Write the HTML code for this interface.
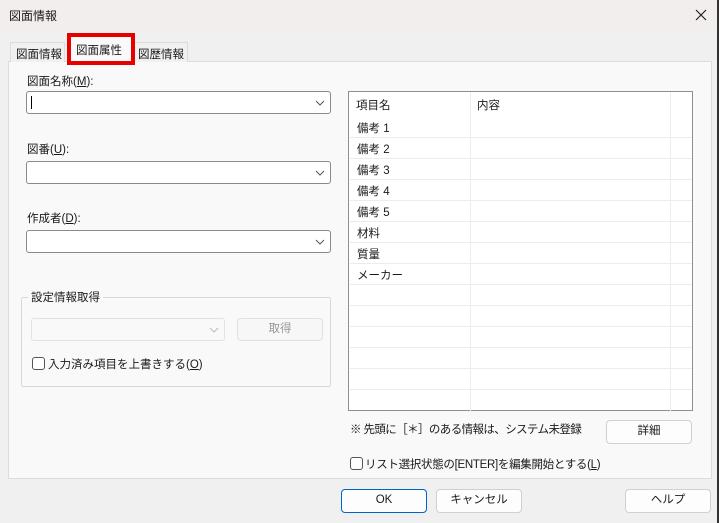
<!DOCTYPE html>
<html><head><meta charset="utf-8"><style>
*{box-sizing:border-box;margin:0;padding:0}
body{width:719px;height:523px;background:#f0f0f0;font-family:"Liberation Sans","Noto Sans CJK JP",sans-serif;font-size:11.5px;color:#1a1a1a;position:relative;overflow:hidden;white-space:nowrap}
.a{position:absolute}
.title{left:0;top:0;width:719px;height:31px;background:#f2eeee;}
.combo{background:#fff;border:1px solid #8a8a8a;border-radius:3px;height:23px}
.combo svg{position:absolute;right:5px;top:8px}
.btn{background:#fdfdfd;border:1px solid #d0d0d0;border-radius:4px;text-align:center;font-size:11.5px;line-height:21px}
.row{position:absolute;left:1px;width:342px;height:21px;border-bottom:1px solid #ececec}
.row span{position:absolute;left:7px;top:3px}
.cb{width:13px;height:13px;border:1px solid #555;border-radius:3px;background:#fff}
</style></head><body>
<div class="a title"></div>
<div class="a" style="left:9px;top:7px;font-size:12px">図面情報</div>
<svg class="a" style="left:695px;top:9px" width="12" height="12"><path d="M1 1L11 11M11 1L1 11" stroke="#222" stroke-width="1.2"/></svg>
<div class="a" style="left:717px;top:0;width:2px;height:523px;background:#333"></div>
<!-- panel -->
<div class="a" style="left:8px;top:61px;width:704px;height:418px;background:#f9f9f9;border:1px solid #dcdcdc"></div>
<!-- tabs -->
<div class="a" style="left:10px;top:42px;width:55px;height:20px;border:1px solid #dcdcdc;border-bottom:none;background:#f0f0f0;padding:3px 0 0 5px">図面情報</div>
<div class="a" style="left:134px;top:42px;width:54px;height:20px;border:1px solid #dcdcdc;border-bottom:none;background:#f0f0f0;padding:3px 0 0 3px">図歴情報</div>
<div class="a" style="left:67px;top:33px;width:68px;height:32px;border:4px solid #e60000;background:#f9f9f9;padding:5px 0 0 5px">図面属性</div>
<!-- left -->
<div class="a" style="left:27px;top:73px">図面名称(<u>M</u>):</div>
<div class="a combo" style="left:26px;top:91px;width:305px"><div class="a" style="left:4px;top:4px;width:1px;height:13px;background:#000"></div><svg width="10" height="6"><path d="M1 1L5 5L9 1" fill="none" stroke="#555"/></svg></div>
<div class="a" style="left:27px;top:141px">図番(<u>U</u>):</div>
<div class="a combo" style="left:26px;top:161px;width:305px"><svg width="10" height="6"><path d="M1 1L5 5L9 1" fill="none" stroke="#555"/></svg></div>
<div class="a" style="left:27px;top:210px">作成者(<u>D</u>):</div>
<div class="a combo" style="left:26px;top:230px;width:305px"><svg width="10" height="6"><path d="M1 1L5 5L9 1" fill="none" stroke="#555"/></svg></div>
<div class="a" style="left:21px;top:297px;width:310px;height:90px;border:1px solid #d8d8d8;border-radius:2px"></div>
<div class="a" style="left:28px;top:289px;background:#f9f9f9;padding:0 3px">設定情報取得</div>
<div class="a" style="left:31px;top:318px;width:194px;height:23px;border:1px solid #e2e2e2;border-radius:3px;background:#f9f9f9"><svg class="a" style="right:5px;top:8px" width="10" height="6"><path d="M1 1L5 5L9 1" fill="none" stroke="#bbb"/></svg></div>
<div class="a btn" style="left:237px;top:318px;width:86px;height:23px;color:#999;border-color:#e0e0e0;background:#f7f7f7">取得</div>
<div class="a cb" style="left:32px;top:357px"></div>
<div class="a" style="left:48px;top:356px">入力済み項目を上書きする(<u>O</u>)</div>
<!-- table -->
<div class="a" style="left:348px;top:91px;width:345px;height:320px;background:#fff;border:1px solid #8a8f99">
<div class="a" style="left:121px;top:0;width:1px;height:319px;background:#ececec"></div>
<div class="a" style="left:321px;top:0;width:1px;height:319px;background:#ececec"></div>
<div class="a" style="left:7px;top:5px">項目名</div><div class="a" style="left:128px;top:5px">内容</div>
<div class="row" style="top:25px"><span>備考 1</span></div>
<div class="row" style="top:46px"><span>備考 2</span></div>
<div class="row" style="top:67px"><span>備考 3</span></div>
<div class="row" style="top:88px"><span>備考 4</span></div>
<div class="row" style="top:109px"><span>備考 5</span></div>
<div class="row" style="top:130px"><span>材料</span></div>
<div class="row" style="top:151px"><span>質量</span></div>
<div class="row" style="top:172px"><span>メーカー</span></div>
<div class="row" style="top:193px"></div><div class="row" style="top:214px"></div><div class="row" style="top:235px"></div><div class="row" style="top:256px"></div><div class="row" style="top:277px"></div>
</div>
<div class="a" style="left:350px;top:421px;letter-spacing:-0.6px">※ 先頭に［＊］のある情報は、システム未登録</div>
<div class="a btn" style="left:606px;top:420px;width:86px;height:24px">詳細</div>
<div class="a cb" style="left:350px;top:457px"></div>
<div class="a" style="left:365px;top:456px;letter-spacing:-0.3px">リスト選択状態の[ENTER]を編集開始とする(<u>L</u>)</div>
<!-- bottom -->
<div class="a btn" style="left:341px;top:489px;width:86px;height:24px;border:1px solid #0067c0">OK</div>
<div class="a btn" style="left:436px;top:489px;width:86px;height:24px">キャンセル</div>
<div class="a btn" style="left:625px;top:489px;width:86px;height:24px">ヘルプ</div>
</body></html>
